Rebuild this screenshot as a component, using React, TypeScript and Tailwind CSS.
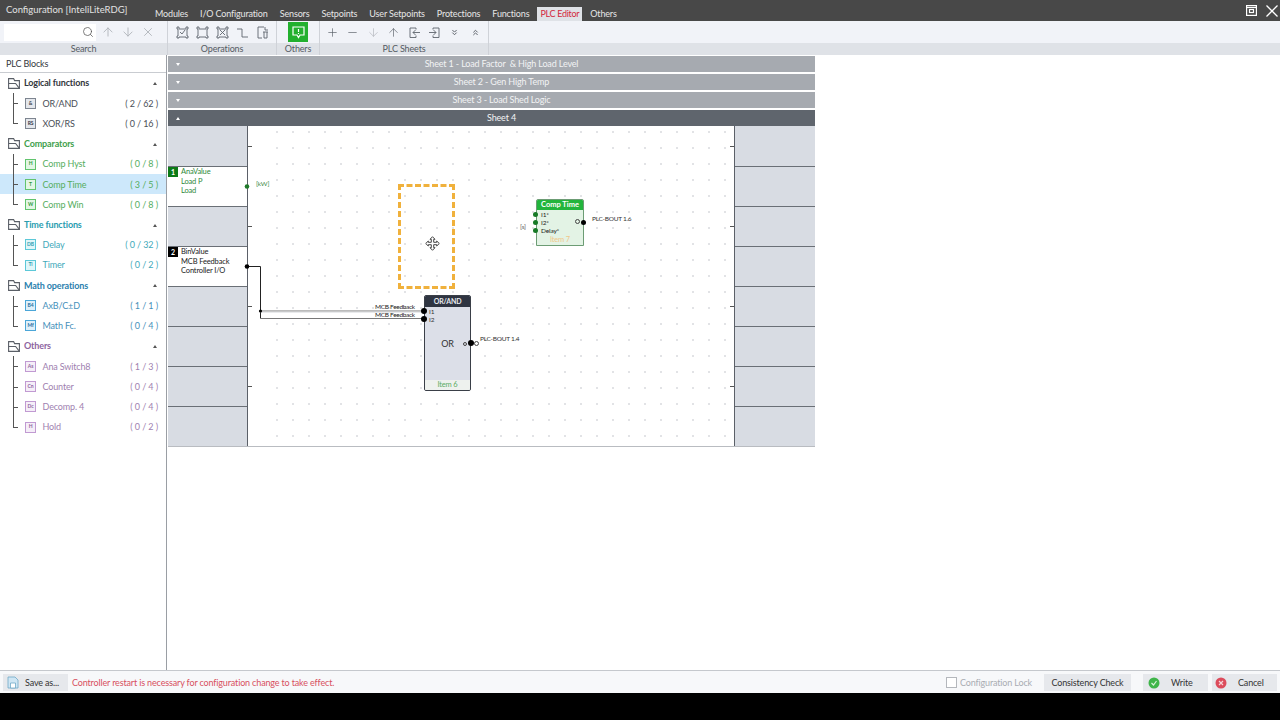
import { ArrowDown, ArrowUp, ChevronsDown, ChevronsUp, Minus, Plus, Search, X } from 'lucide-react'

const tabs = ['Modules', 'I/O Configuration', 'Sensors', 'Setpoints', 'User Setpoints', 'Protections', 'Functions', 'PLC Editor', 'Others']

const groups = [
  {
    name: 'Logical functions',
    head: 'text-[#33373d]',
    text: 'text-[#4a4f57]',
    box: 'border-[#7d8590] bg-[#e4e7ec] text-[#39404a]',
    items: [
      ['&', 'OR/AND', '( 2 / 62 )'],
      ['RS', 'XOR/RS', '( 0 / 16 )'],
    ],
  },
  {
    name: 'Comparators',
    head: 'text-[#3f9f4c]',
    text: 'text-[#55ad60]',
    box: 'border-[#62c46e] bg-[#e3f6e5] text-[#2f9a3e]',
    items: [
      ['H', 'Comp Hyst', '( 0 / 8 )'],
      ['T', 'Comp Time', '( 3 / 5 )'],
      ['W', 'Comp Win', '( 0 / 8 )'],
    ],
  },
  {
    name: 'Time functions',
    head: 'text-[#2a9db0]',
    text: 'text-[#42a9ba]',
    box: 'border-[#5cc8d8] bg-[#e0f6f9] text-[#2a9db0]',
    items: [
      ['DB', 'Delay', '( 0 / 32 )'],
      ['Ti', 'Timer', '( 0 / 2 )'],
    ],
  },
  {
    name: 'Math operations',
    head: 'text-[#2b7fae]',
    text: 'text-[#4690ba]',
    box: 'border-[#4ba6d8] bg-[#dff0fa] text-[#236f9e]',
    items: [
      ['B4', 'AxB/C±D', '( 1 / 1 )'],
      ['Mf', 'Math Fc.', '( 0 / 4 )'],
    ],
  },
  {
    name: 'Others',
    head: 'text-[#8d64a0]',
    text: 'text-[#a07fb0]',
    box: 'border-[#c19ad2] bg-[#f5eef8] text-[#8d64a0]',
    items: [
      ['As', 'Ana Switch8', '( 1 / 3 )'],
      ['Cn', 'Counter', '( 0 / 4 )'],
      ['Dc', 'Decomp. 4', '( 0 / 4 )'],
      ['H', 'Hold', '( 0 / 2 )'],
    ],
  },
]

const sheets = ['Sheet 1 - Load Factor  & High Load Level', 'Sheet 2 - Gen High Temp', 'Sheet 3 - Load Shed Logic']

function FolderIcon() {
  return (
    <svg width="12" height="11" viewBox="0 0 12 11" fill="none" stroke="#5a5f67" strokeWidth="1.100">
      <path d="M0.6 0.6h5l1 2h4.800v7.800h-10.800z" />
      <path d="M0.6 5.500h7l3.800 4.900" />
    </svg>
  )
}

function OpIcon({ kind }: { kind: number }) {
  return (
    <svg width="13" height="13" viewBox="0 0 13 13" fill="none" stroke="#5f656d" strokeWidth="0.9">
      {kind === 0 && <path d="M1 1h2v2h7V1h2v2h-1v7h1v2h-2v-1H3v1H1v-2h1V3H1zM4 6l2 2 3-4" />}
      {kind === 1 && <path d="M1 1h2v2h7V1h2v2h-1v7h1v2h-2v-1H3v1H1v-2h1V3H1z" />}
      {kind === 2 && <path d="M1 1h2v2h7V1h2v2h-1v7h1v2h-2v-1H3v1H1v-2h1V3H1zM4 4l5 5M9 4l-5 5" />}
      {kind === 3 && <path d="M1 3h5v8h6" />}
      {kind === 4 && <path d="M8 1H2v11h4M7 6h5M8 6v6h3V6M9 1v3h3" />}
    </svg>
  )
}

function SheetMoveIcon({ flip }: { flip?: boolean }) {
  return (
    <svg width="13" height="13" viewBox="0 0 13 13" fill="none" stroke="#5f656d" strokeWidth="0.9" className={flip ? '-scale-x-100' : ''}>
      <path d="M5 3.500V2h6v9.500H5V9.500M1 6.500h7M5.500 4l2.500 2.500L5.500 9" />
    </svg>
  )
}

function Block({ abbr, box }: { abbr: string; box: string }) {
  return <span className={`flex h-[11px] w-[11px] shrink-0 items-center justify-center border text-[5px] font-bold ${box}`}>{abbr}</span>
}

function Sidebar() {
  return (
    <aside className="w-[167px] shrink-0 border-r border-[#9a9ea4] bg-white">
      <div className="flex h-[18px] items-center border-b border-[#c9ccd1] pl-[6px] pt-px text-[9px] text-[#33373d]">PLC Blocks</div>
      {groups.map(g => (
        <div key={g.name}>
          <div className="flex h-[20.24px] items-center pl-[8px] pr-[9px]">
            <FolderIcon />
            <span className={`ml-[4px] flex-1 text-[9px] font-bold ${g.head}`}>{g.name}</span>
            <span className="mt-[1px] h-0 w-0 border-x-[2.500px] border-b-[3px] border-x-transparent border-b-[#555]" />
          </div>
          {g.items.map(([abbr, label, count], i) => (
            <div key={label} className={`relative flex h-[20.24px] items-center pl-[25px] pr-[8px] ${label === 'Comp Time' ? 'bg-[#cde8fb]' : ''}`}>
              <span className={`absolute left-[13px] top-0 w-px bg-[#555] ${i === g.items.length - 1 ? 'h-[10px]' : 'h-full'}`} />
              <span className="absolute left-[13px] top-[10px] h-px w-[5px] bg-[#555]" />
              <Block abbr={abbr} box={g.box} />
              <span className={`ml-[6.500px] flex-1 text-[9px] ${g.text}`}>{label}</span>
              <span className={`whitespace-pre text-[9px] tracking-[-0.1px] ${g.text}`}>{count}</span>
            </div>
          ))}
        </div>
      ))}
    </aside>
  )
}

function Rail({ side }: { side: 'left' | 'right' }) {
  const rows = [0, 1, 2, 3, 4, 5, 6, 7]
  return (
    <div className={side === 'left' ? 'w-[80px] shrink-0 border-r border-[#5b6068]' : 'w-[81px] shrink-0 border-l border-[#5b6068]'}>
      {rows.map(r => {
        const white = side === 'left' && (r === 1 || r === 3)
        return (
          <div key={r} className={`relative h-[40px] border-t border-[#6a6f76] first:border-t-0 ${white ? 'bg-white' : 'bg-[#d8dce3]'}`}>
            {side === 'left' && r === 1 && (
              <div className="flex h-full items-start">
                <span className="flex h-[10px] w-[10px] shrink-0 items-center justify-center bg-[#0c7a17] text-[7px] font-bold text-white">1</span>
                <div className="ml-[3px] text-[7.500px] leading-[9.600px] text-[#2f8a3a]">
                  <div>AnaValue</div>
                  <div>Load P</div>
                  <div>Load</div>
                </div>
              </div>
            )}
            {side === 'left' && r === 3 && (
              <div className="flex h-full items-start">
                <span className="flex h-[10px] w-[10px] shrink-0 items-center justify-center bg-black text-[7px] font-bold text-white">2</span>
                <div className="ml-[3px] text-[7.500px] leading-[9.600px] text-[#222]">
                  <div>BinValue</div>
                  <div>MCB Feedback</div>
                  <div>Controller I/O</div>
                </div>
              </div>
            )}
          </div>
        )
      })}
    </div>
  )
}

function Canvas() {
  return (
    <div className="relative h-[320px] w-[486px] shrink-0">
      {/* Grid dots */}
      <div className="absolute inset-y-0 left-[24px] right-[8px] bg-[radial-gradient(circle,#e2e3e6_0.8px,transparent_1px)] bg-[size:16px_16px] bg-[position:-3px_-2px]" />

      <svg className="absolute inset-0 overflow-visible" width="486" height="320" fill="none">
        <path d="M0 20.500h4M0 100.500h4M0 180.500h4M0 260.500h4M482 20.500h4M482 100.500h4M482 180.500h4M482 260.500h4" stroke="#555" />
        <path d="M0 140.500h12.500v52" stroke="#222" />
        <path d="M12.500 185h163M12.500 192.500h163" stroke="#777" />
        <path d="M12.500 186h163" stroke="#d4d6d9" />
        <circle cx="-1" cy="60.500" r="2.300" fill="#1f7a2a" />
        <circle cx="-1" cy="140.500" r="2.300" fill="#000" />
        <circle cx="12.500" cy="185" r="1.600" fill="#000" />
      </svg>

      <span className="absolute left-[8px] top-[53px] text-[6.500px] text-[#3d8a46]">[kW]</span>
      <span className="absolute left-[127px] top-[177px] text-[6.500px] leading-[8px] tracking-[-0.3px] text-[#222]">MCB Feedback</span>
      <span className="absolute left-[127px] top-[185px] text-[6.500px] leading-[8px] tracking-[-0.3px] text-[#222]">MCB Feedback</span>

      {/* Selection */}
      <div className="absolute left-[150px] top-[58px] h-[105px] w-[57px] border-[3px] border-dashed border-[#f0b13c]" />
      <svg width="15" height="15" viewBox="0 0 15 15" fill="#fff" stroke="#333" strokeWidth="0.9" className="absolute left-[177px] top-[110px]">
        <path d="M7.500 0.700L10 3.300H8.700V6.300H11.700V5L14.300 7.500L11.700 10V8.700H8.700V11.700H10L7.500 14.300L5 11.700H6.300V8.700H3.300V10L0.700 7.500L3.300 5V6.300H6.300V3.300H5z" />
      </svg>

      {/* OR/AND */}
      <div className="absolute left-[176px] top-[169px] flex h-[96px] w-[47px] flex-col overflow-hidden rounded-[2px] border border-[#3a3f48] bg-[#dcdfe8]">
        <div className="flex h-[11px] shrink-0 items-center justify-center bg-[#2f3542] text-[7px] font-bold text-[#e8eaee]">OR/AND</div>
        <div className="relative flex-1">
          <span className="absolute left-[4px] top-[1px] text-[6.500px] leading-[8px] text-[#333]">I1</span>
          <span className="absolute left-[4px] top-[9px] text-[6.500px] leading-[8px] text-[#333]">I2</span>
          <span className="absolute left-0 right-0 top-[30px] text-center text-[9px] text-[#333]">OR</span>
          <span className="absolute right-[3px] top-[35px] h-[4px] w-[4px] rounded-full border border-[#444]" />
        </div>
        <div className="flex h-[10px] shrink-0 items-center justify-center bg-[#eef1ee] text-[7.500px] text-[#5aac64]">Item 6</div>
      </div>
      <span className="absolute left-[173px] top-[182px] h-[6px] w-[6px] rounded-full bg-black" />
      <span className="absolute left-[173px] top-[190px] h-[6px] w-[6px] rounded-full bg-black" />
      <span className="absolute left-[220px] top-[214px] h-[6px] w-[6px] rounded-full bg-black" />
      <span className="absolute left-[226px] top-[215px] h-[5px] w-[5px] rounded-full border border-[#444] bg-white" />
      <span className="absolute left-[232px] top-[209px] text-[6.500px] leading-[8px] tracking-[-0.25px] text-[#333]">PLC-BOUT 1.4</span>

      {/* Comp Time */}
      <div className="absolute left-[288px] top-[73px] flex h-[47px] w-[48px] flex-col overflow-hidden rounded-t-[2px] border border-[#6c9c74] bg-[#e3f3e5]">
        <div className="flex h-[10px] shrink-0 items-center justify-center bg-[#22b53c] text-[7.500px] font-bold tracking-normal text-white">Comp Time</div>
        <div className="relative flex-1 pl-[4px] pt-[1px] text-[6.500px] leading-[8px] text-[#222]">
          <div>I1*</div>
          <div>I2*</div>
          <div>Delay*</div>
          <span className="absolute right-[3px] top-[9px] h-[5px] w-[5px] rounded-full border border-[#444]" />
        </div>
        <div className="flex h-[10px] shrink-0 items-center justify-center text-[7.500px] text-[#f0c88a]">Item 7</div>
      </div>
      <span className="absolute left-[285px] top-[86px] h-[5px] w-[5px] rounded-full bg-[#177a26]" />
      <span className="absolute left-[285px] top-[94px] h-[5px] w-[5px] rounded-full bg-[#177a26]" />
      <span className="absolute left-[285px] top-[102px] h-[5px] w-[5px] rounded-full bg-[#177a26]" />
      <span className="absolute left-[333px] top-[94px] h-[5px] w-[5px] rounded-full bg-black" />
      <span className="absolute left-[272px] top-[97px] text-[6.500px] leading-[8px] text-[#666]">[s]</span>
      <span className="absolute left-[344px] top-[89px] text-[6.500px] leading-[8px] tracking-[-0.25px] text-[#333]">PLC-BOUT 1.6</span>
    </div>
  )
}

export default function App() {
  return (
    <div className="flex h-[720px] w-[1280px] flex-col overflow-hidden bg-black font-['Lato',sans-serif] tracking-[-0.15px]">
      {/* Title bar */}
      <header className="flex h-[21px] shrink-0 bg-[#484848]">
        <div className="w-[149px] shrink-0 pl-[6px] pt-[3px] text-[9.500px] leading-[13px] tracking-normal text-[#e2e2e2]">Configuration [InteliLiteRDG]</div>
        <nav className="flex items-end">
          {tabs.map(t => (
            <span
              key={t}
              className={t === 'PLC Editor'
                ? 'mx-[2px] flex h-[14px] items-center bg-[#dfe2e7] px-[3px] text-[9px] tracking-[-0.3px] text-[#d3283c]'
                : 'mx-[1px] flex h-[14px] items-center px-[5px] text-[9px] text-[#e6e6e6]'}
            >
              {t}
            </span>
          ))}
        </nav>
        <div className="ml-auto flex items-center gap-[9px] pr-[2px] text-white">
          <svg width="11" height="11" viewBox="0 0 11 11" fill="none" stroke="#fff" strokeWidth="1.200">
            <rect x="0.6" y="0.6" width="9.800" height="9.800" />
            <path d="M0.6 2.500h9.800" />
            <rect x="3.500" y="4.500" width="4" height="3" />
          </svg>
          <svg width="12" height="12" viewBox="0 0 12 12" fill="none" stroke="#fff" strokeWidth="1.300">
            <path d="M0.5 0.5l11 11M11.500 0.5l-11 11" />
          </svg>
        </div>
      </header>

      {/* Ribbon */}
      <div className="flex h-[22px] shrink-0 bg-[#f1f3f8]">
        <div className="flex w-[168px] shrink-0 items-center border-r border-[#cfd2d8] pl-[4px]">
          <div className="flex h-[17px] w-[92px] items-center justify-end bg-white pr-[2px]">
            <Search size={12} strokeWidth={1.500} className="text-[#555]" />
          </div>
          <div className="ml-[5px] flex gap-[6px] text-[#aeb2b8]">
            <ArrowUp size={14} strokeWidth={1.500} />
            <ArrowDown size={14} strokeWidth={1.500} />
            <X size={14} strokeWidth={1.500} />
          </div>
        </div>
        <div className="flex w-[109px] shrink-0 items-center gap-[7px] border-r border-[#cfd2d8] pl-[8px]">
          {[0, 1, 2, 3, 4].map(k => <OpIcon key={k} kind={k} />)}
        </div>
        <div className="flex w-[43px] shrink-0 items-center justify-center border-r border-[#cfd2d8]">
          <span className="flex h-[20px] w-[20px] items-center justify-center bg-[#22b02e]">
            <svg width="13" height="13" viewBox="0 0 13 13" fill="none" stroke="#fff" strokeWidth="1.200">
              <path d="M1 1h11v8H8l-1.500 2.500L5 9H1z" />
              <path d="M6.500 3v3M6.500 7v1" />
            </svg>
          </span>
        </div>
        <div className="flex w-[169px] shrink-0 items-center gap-[7.400px] border-r border-[#cfd2d8] pl-[6px] text-[#555b63]">
          <Plus size={13} strokeWidth={1.200} />
          <Minus size={13} strokeWidth={1.200} />
          <ArrowDown size={13} strokeWidth={1.200} className="text-[#aeb2b8]" />
          <ArrowUp size={13} strokeWidth={1.200} />
          <SheetMoveIcon flip />
          <SheetMoveIcon />
          <span className="flex w-[13px] justify-center"><ChevronsDown size={9} strokeWidth={2.500} /></span>
          <span className="flex w-[13px] justify-center"><ChevronsUp size={9} strokeWidth={2.500} /></span>
        </div>
      </div>
      <div className="flex h-[12px] shrink-0 bg-[#dfe2e7] text-center text-[9px] leading-[12px] text-[#555b63]">
        <div className="w-[168px] shrink-0 border-r border-[#cfd2d8]">Search</div>
        <div className="w-[109px] shrink-0 border-r border-[#cfd2d8]">Operations</div>
        <div className="w-[43px] shrink-0 border-r border-[#cfd2d8]">Others</div>
        <div className="w-[169px] shrink-0 border-r border-[#cfd2d8]">PLC Sheets</div>
      </div>

      {/* Main */}
      <div className="flex h-[615px] shrink-0 bg-white">
        <Sidebar />
        <div className="w-[648px] shrink-0 pl-px pt-px">
          <div className="flex flex-col gap-[2px]">
            {sheets.map(s => (
              <div key={s} className="relative flex h-[16px] items-center justify-center whitespace-pre bg-[#a6aab0] pl-[20px] text-[9px] text-[#f2f3f4]">
                <span className="absolute left-[8px] h-0 w-0 border-x-[2.500px] border-t-[3px] border-x-transparent border-t-white" />
                {s}
              </div>
            ))}
            <div className="relative flex h-[16px] items-center justify-center bg-[#5f656d] pl-[20px] text-[9px] text-[#f2f3f4]">
              <span className="absolute left-[8px] h-0 w-0 border-x-[2.500px] border-b-[3px] border-x-transparent border-b-white" />
              Sheet 4
            </div>
          </div>
          <div className="flex border-b border-[#b9bcc1]">
            <Rail side="left" />
            <Canvas />
            <Rail side="right" />
          </div>
        </div>
      </div>

      {/* Footer */}
      <footer className="flex h-[23px] shrink-0 items-center border-t border-[#c5c8cd] bg-[#f7f8fa] pl-[3px] pr-[3px] pt-px">
        <button className="flex h-[17px] w-[65px] items-center bg-[#e6e8ec] pl-[4px] text-[9px] text-[#333]">
          <svg width="12" height="13" viewBox="0 0 12 13" fill="#cfe6f4" stroke="#6fa8c8" strokeWidth="0.8">
            <path d="M1 1h7l3 3v8H1z" />
            <path d="M3.500 7h5v5h-5z" fill="#fff" />
          </svg>
          <span className="ml-[6px]">Save as...</span>
        </button>
        <span className="ml-[4px] text-[9px] text-[#d8505f]">Controller restart is necessary for configuration change to take effect.</span>
        <span className="ml-auto h-[11px] w-[11px] border border-[#b4b7bc] bg-white" />
        <span className="ml-[3px] text-[9px] text-[#a9acb2]">Configuration Lock</span>
        <button className="ml-[12px] h-[17px] w-[87px] bg-[#e6e8ec] text-[9px] text-[#333]">Consistency Check</button>
        <button className="ml-[12px] flex h-[17px] w-[65px] items-center bg-[#e6e8ec] pl-[5px] text-[9px] text-[#333]">
          <svg width="12" height="12" viewBox="0 0 12 12">
            <circle cx="6" cy="6" r="5.500" fill="#3fb54a" />
            <path d="M3.500 6l2 2 3-4" fill="none" stroke="#d8f2da" strokeWidth="1.200" />
          </svg>
          <span className="ml-[11px]">Write</span>
        </button>
        <button className="ml-[4px] flex h-[17px] w-[65px] items-center bg-[#e6e8ec] pl-[3px] text-[9px] text-[#333]">
          <svg width="12" height="12" viewBox="0 0 12 12">
            <circle cx="6" cy="6" r="5.500" fill="#dc4c5c" />
            <path d="M4 4l4 4M8 4l-4 4" fill="none" stroke="#f6d5d9" strokeWidth="1.200" />
          </svg>
          <span className="ml-[11px]">Cancel</span>
        </button>
      </footer>
    </div>
  )
}
